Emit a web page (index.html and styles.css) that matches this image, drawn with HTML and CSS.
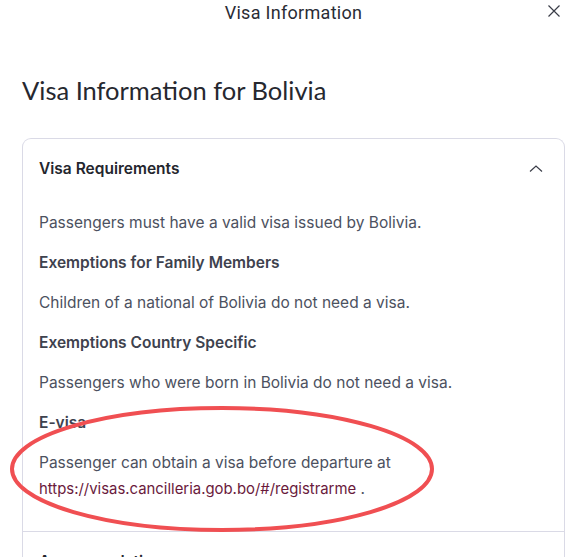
FILE: index.html
```html
<!DOCTYPE html>
<html lang="en">
<head>
<meta charset="utf-8">
<title>Visa Information</title>
<link rel="stylesheet" href="styles.css">
</head>
<body>
<div class="modal">
  <header class="topbar">
    <span class="topbar-title">Visa Information</span>
    <button class="close" aria-label="Close">
      <svg width="14" height="14" viewBox="0 0 14 14"><path d="M1.5 1.5 L12.5 12.5 M12.5 1.5 L1.5 12.5" stroke="#3a3d48" stroke-width="1.2" fill="none"/></svg>
    </button>
  </header>
  <h1 class="page-title">Visa Information for Bolivia</h1>
  <section class="card">
    <div class="acc-item open">
      <div class="acc-head">
        <span class="acc-title">Visa Requirements</span>
        <svg class="chev" width="24" height="24" viewBox="0 0 24 24"><path d="M6 15.5 L12 10 L18 15.5" stroke="#3a3d48" stroke-width="1.2" fill="none"/></svg>
      </div>
      <div class="acc-body">
        <p>Passengers must have a valid visa issued by Bolivia.</p>
        <h3>Exemptions for Family Members</h3>
        <p>Children of a national of Bolivia do not need a visa.</p>
        <h3>Exemptions Country Specific</h3>
        <p>Passengers who were born in Bolivia do not need a visa.</p>
        <h3>E-visa</h3>
        <p class="wrap">Passenger can obtain a visa before departure at <a href="#">https://visas.cancilleria.gob.bo/#/registrarme</a> .</p>
      </div>
    </div>
    <div class="acc-item">
      <div class="acc-head">
        <span class="acc-title">Accommodation</span>
        <svg class="chev" width="24" height="24" viewBox="0 0 24 24"><path d="M6 10 L12 15.5 L18 10" stroke="#3a3d48" stroke-width="1.2" fill="none"/></svg>
      </div>
    </div>
  </section>
</div>
<svg class="annotation" width="577" height="557" viewBox="0 0 577 557"><ellipse cx="222" cy="469" rx="210" ry="61" fill="none" stroke="#f04f52" stroke-width="4"/></svg>
</body>
</html>
```
FILE: styles.css
```css
html, body {
  margin: 0;
  padding: 0;
  background: #ffffff;
}
body {
  font-family: Inter, "Noto Sans", sans-serif;
  color: #2c2e38;
  overflow: hidden;
  height: 557px;
  position: relative;
}
.modal {
  padding: 0 12px 0 22px;
}
.topbar {
  height: 24px;
  display: flex;
  align-items: center;
  justify-content: center;
  position: relative;
}
.topbar-title {
  font-family: Roboto, "Liberation Sans", sans-serif;
  font-size: 18px;
  letter-spacing: 0.3px;
  color: #2a2c35;
}
.close {
  position: absolute;
  right: 4px;
  top: 4px;
  border: 0;
  background: none;
  padding: 0;
  width: 14px;
  height: 14px;
  display: flex;
}
.page-title {
  font-family: Lato, "Open Sans", sans-serif;
  font-weight: 400;
  font-size: 25.5px;
  line-height: 32px;
  margin: 50px 0 32px;
  color: #26282f;
}
.card {
  border: 1px solid #dadae6;
  border-bottom: 0;
  border-radius: 9px 9px 0 0;
}
.acc-item + .acc-item {
  border-top: 1px solid #dadae6;
}
.acc-head {
  display: flex;
  align-items: center;
  justify-content: space-between;
  padding: 17px 16px 17px 16px;
  height: 24px;
}
.acc-title {
  font-size: 15.5px;
  font-weight: 600;
  color: #24262e;
}
.acc-body {
  padding: 13px 16px 29px;
  font-size: 15.5px;
  line-height: 26px;
  color: #4c5160;
}
.acc-body p, .acc-body h3 {
  margin: 0 0 14px;
  font-size: 15.5px;
}
.acc-body h3 {
  font-weight: 600;
  color: #3e424e;
}
.acc-body p.wrap {
  margin-bottom: 0;
  max-width: 420px;
}
.acc-body a {
  color: #6a1a3c;
  font-size: 14.9px;
  text-decoration: none;
}
.annotation {
  position: absolute;
  left: 0;
  top: 0;
  pointer-events: none;
}
```
